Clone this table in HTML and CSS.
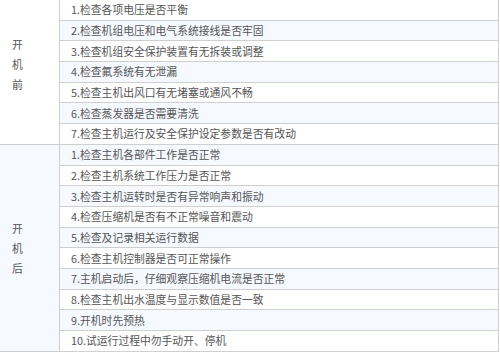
FILE: index.html
```html
<!DOCTYPE html>
<html lang="zh">
<head>
<meta charset="utf-8">
<link rel="stylesheet" href="styles.css">
</head>
<body>
<table class="check">
  <tbody>
    <tr><td class="stage stage-before" rowspan="7">开<br>机<br>前</td><td class="item">1.检查各项电压是否平衡</td></tr>
    <tr><td class="item">2.检查机组电压和电气系统接线是否牢固</td></tr>
    <tr><td class="item">3.检查机组安全保护装置有无拆装或调整</td></tr>
    <tr><td class="item">4.检查氟系统有无泄漏</td></tr>
    <tr><td class="item">5.检查主机出风口有无堵塞或通风不畅</td></tr>
    <tr><td class="item">6.检查蒸发器是否需要清洗</td></tr>
    <tr><td class="item">7.检查主机运行及安全保护设定参数是否有改动</td></tr>
    <tr><td class="stage" rowspan="10">开<br>机<br>后</td><td class="item">1.检查主机各部件工作是否正常</td></tr>
    <tr><td class="item">2.检查主机系统工作压力是否正常</td></tr>
    <tr><td class="item">3.检查主机运转时是否有异常响声和振动</td></tr>
    <tr><td class="item">4.检查压缩机是否有不正常噪音和震动</td></tr>
    <tr><td class="item">5.检查及记录相关运行数据</td></tr>
    <tr><td class="item">6.检查主机控制器是否可正常操作</td></tr>
    <tr><td class="item">7.主机启动后，仔细观察压缩机电流是否正常</td></tr>
    <tr><td class="item">8.检查主机出水温度与显示数值是否一致</td></tr>
    <tr><td class="item">9.开机时先预热</td></tr>
    <tr><td class="item">10.试运行过程中勿手动开、停机</td></tr>
  </tbody>
</table>
</body>
</html>
```

FILE: styles.css
```css
html, body {
  margin: 0;
  padding: 0;
  background: #ffffff;
}

body {
  font-family: "Noto Sans CJK SC", "Noto Sans", sans-serif;
  font-size: 10.8px;
  color: #555555;
}

.check {
  border-collapse: collapse;
  width: 499px;
  margin-top: -1px;
}

.check tr {
  height: 20.7px;
}

.check tr:nth-child(even) {
  background: #f6f9ff;
}

.check td {
  border-top: 1px solid #cfcfcf;
  border-bottom: 1px solid #cfcfcf;
  padding: 0;
}

.stage {
  width: 47px;
  padding: 0 0 0 12px !important;
  border-right: 1px solid #cfcfcf;
  border-left: none;
  line-height: 20px;
  vertical-align: middle;
  text-align: left;
}

.stage-before {
  padding-bottom: 15px !important;
}

.item {
  padding: 0 0 0 11px !important;
  border-right: 1px solid #cfcfcf;
  line-height: 19px;
  white-space: nowrap;
  vertical-align: middle;
}
```
